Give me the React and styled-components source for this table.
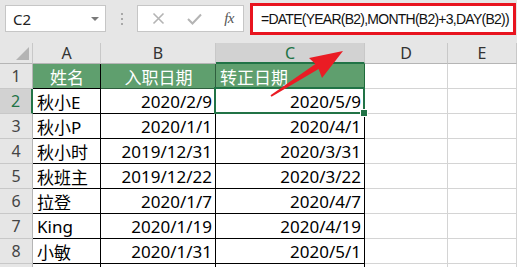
import React from 'react';
import styled, { createGlobalStyle } from 'styled-components';

const GlobalStyle = createGlobalStyle`
	html, body {
		margin: 0;
		padding: 0;
		background: #ffffff;
	}
	* {
		box-sizing: border-box;
	}
`;

const GREEN = '#217346';
const HEAD_BG = '#e6e6e6';
const SEL_BG = '#d2d2d2';

const Sheet = styled.div`
	position: relative;
	width: 517px;
	height: 267px;
	overflow: hidden;
	font-family: "Noto Sans", "Noto Sans CJK SC", sans-serif;
	background: #ffffff;
`;

const FormulaBar = styled.div`
	height: 43px;
	display: flex;
	align-items: flex-start;
	padding: 3px 0 0 5px;
	background: ${HEAD_BG};
`;

const Box = styled.div`
	height: 27px;
	margin-top: 2px;
	display: flex;
	align-items: center;
	background: #ffffff;
	border: 1px solid #c6c6c6;
`;

const NameBox = styled(Box)`
	width: 101px;
	justify-content: space-between;
	padding: 0 6px 0 7px;
	font-size: 15px;
	color: #222;
`;

const DropArrow = styled.span`
	width: 0;
	height: 0;
	border-left: 4px solid transparent;
	border-right: 4px solid transparent;
	border-top: 4px solid #7a7a7a;
`;

const Grip = styled.div`
	width: 31px;
	height: 27px;
	margin-top: 2px;
	display: flex;
	flex-direction: column;
	align-items: center;
	justify-content: center;
	gap: 3px;

	span {
		width: 2px;
		height: 2px;
		background: #a8a8a8;
	}
`;

const FxBox = styled(Box)`
	width: 107px;
	padding: 0 9px 0 14px;
	justify-content: space-between;
`;

const Fx = styled.span`
	font-family: "Liberation Serif", serif;
	font-style: italic;
	font-size: 15px;
	color: #555;
	letter-spacing: -0.5px;
`;

const FormulaInput = styled.div`
	width: 266px;
	height: 32px;
	margin-left: 6px;
	display: flex;
	align-items: center;
	padding-left: 8px;
	background: #ffffff;
	border: 3px solid #e8141f;
	font-family: "Liberation Sans", Arial, sans-serif;
	font-size: 14px;
	letter-spacing: -0.75px;
	color: #111;
	white-space: nowrap;
	overflow: hidden;
`;

const Grid = styled.div`
	display: grid;
	grid-template-columns: 33px 68px 115px 149px 83px 1fr;
	grid-template-rows: 21px repeat(9, 25px);
`;

const Corner = styled.div`
	position: relative;
	background: ${HEAD_BG};
	border-right: 1px solid #c8c8c8;
	border-bottom: 1px solid #b5b5b5;

	&::after {
		content: '';
		position: absolute;
		right: 3px;
		bottom: 3px;
		border-left: 13px solid transparent;
		border-bottom: 13px solid #b4b4b4;
	}
`;

const ColHead = styled.div`
	display: flex;
	align-items: center;
	justify-content: center;
	font-size: 16px;
	color: ${p => (p.$active ? GREEN : '#333')};
	background: ${p => (p.$active ? SEL_BG : HEAD_BG)};
	border-right: 1px solid #c8c8c8;
	border-bottom: ${p => (p.$active ? `2px solid ${GREEN}` : '1px solid #b5b5b5')};
`;

const RowHead = styled.div`
	display: flex;
	align-items: center;
	justify-content: center;
	font-size: 16px;
	color: ${p => (p.$active ? GREEN : '#444')};
	background: ${p => (p.$active ? SEL_BG : HEAD_BG)};
	border-bottom: 1px solid #c8c8c8;
	border-right: ${p => (p.$active ? `2px solid ${GREEN}` : '1px solid #b5b5b5')};
`;

const Cell = styled.div`
	position: relative;
	display: flex;
	align-items: center;
	justify-content: ${p => (p.$align === 'right' ? 'flex-end' : p.$align === 'center' ? 'center' : 'flex-start')};
	padding: 1px 3px 0 4px;
	font-size: 17px;
	white-space: nowrap;
	color: ${p => (p.$head ? '#ffffff' : '#000000')};
	background: ${p => (p.$head ? '#5f9f6e' : '#ffffff')};
	border-right: 1px solid ${p => p.$line || '#d4d4d4'};
	border-bottom: 1px solid ${p => p.$line || '#d4d4d4'};
`;

const ActiveCell = styled(Cell)`
	&::after {
		content: '';
		position: absolute;
		left: -2px;
		top: -2px;
		right: -1px;
		bottom: -1px;
		border: 2px solid ${GREEN};
		pointer-events: none;
	}

	&::before {
		content: '';
		position: absolute;
		right: -4px;
		bottom: -4px;
		width: 6px;
		height: 6px;
		background: ${GREEN};
		border: 1px solid #ffffff;
		z-index: 1;
	}
`;

const Arrow = styled.svg`
	position: absolute;
	left: 0;
	top: 0;
	pointer-events: none;
`;

const rows = [
	['秋小E', '2020/2/9', '2020/5/9'],
	['秋小P', '2020/1/1', '2020/4/1'],
	['秋小时', '2019/12/31', '2020/3/31'],
	['秋班主', '2019/12/22', '2020/3/22'],
	['拉登', '2020/1/7', '2020/4/7'],
	['King', '2020/1/19', '2020/4/19'],
	['小敏', '2020/1/31', '2020/5/1'],
];

const CrossIcon = () => (
	<svg width="13" height="13" viewBox="0 0 13 13">
		<path d="M1.5 1.5 L11.5 11.5 M11.5 1.5 L1.5 11.5" stroke="#b4b4b4" strokeWidth="1.6" />
	</svg>
);

const CheckIcon = () => (
	<svg width="15" height="12" viewBox="0 0 15 12">
		<path d="M1 6 L5.5 10.5 L14 1.5" stroke="#b4b4b4" strokeWidth="2" fill="none" />
	</svg>
);

export default function App() {
	return (
		<Sheet>
			<GlobalStyle />
			<FormulaBar>
				<NameBox>
					C2
					<DropArrow />
				</NameBox>
				<Grip>
					<span />
					<span />
					<span />
				</Grip>
				<FxBox>
					<CrossIcon />
					<CheckIcon />
					<Fx>fx</Fx>
				</FxBox>
				<FormulaInput>=DATE(YEAR(B2),MONTH(B2)+3,DAY(B2))</FormulaInput>
			</FormulaBar>

			<Grid>
				<Corner />
				<ColHead>A</ColHead>
				<ColHead>B</ColHead>
				<ColHead $active>C</ColHead>
				<ColHead>D</ColHead>
				<ColHead>E</ColHead>

				<RowHead>1</RowHead>
				<Cell $head $line="#000" $align="center">姓名</Cell>
				<Cell $head $line="#2f5f3e" $align="center">入职日期</Cell>
				<Cell $head $line="#1e6b3a">转正日期</Cell>
				<Cell />
				<Cell />

				{rows.map((r, i) => {
					const C = i === 0 ? ActiveCell : Cell;
					return (
						<React.Fragment key={i}>
							<RowHead $active={i === 0}>{i + 2}</RowHead>
							<Cell $line="#000">{r[0]}</Cell>
							<Cell $line="#000" $align="right">{r[1]}</Cell>
							<C $line="#000" $align="right">{r[2]}</C>
							<Cell />
							<Cell />
						</React.Fragment>
					);
				})}

				<RowHead />
				<Cell $line="#000" />
				<Cell $line="#000" />
				<Cell $line="#000" />
				<Cell />
				<Cell />
			</Grid>

			<Arrow width="517" height="267">
				<polygon
					points="270.5,95.2 315.4,64.1 309,58 343,51 322,78 318.6,69.1 271.5,96.8"
					fill="#ea1c24"
				/>
			</Arrow>
		</Sheet>
	);
}
